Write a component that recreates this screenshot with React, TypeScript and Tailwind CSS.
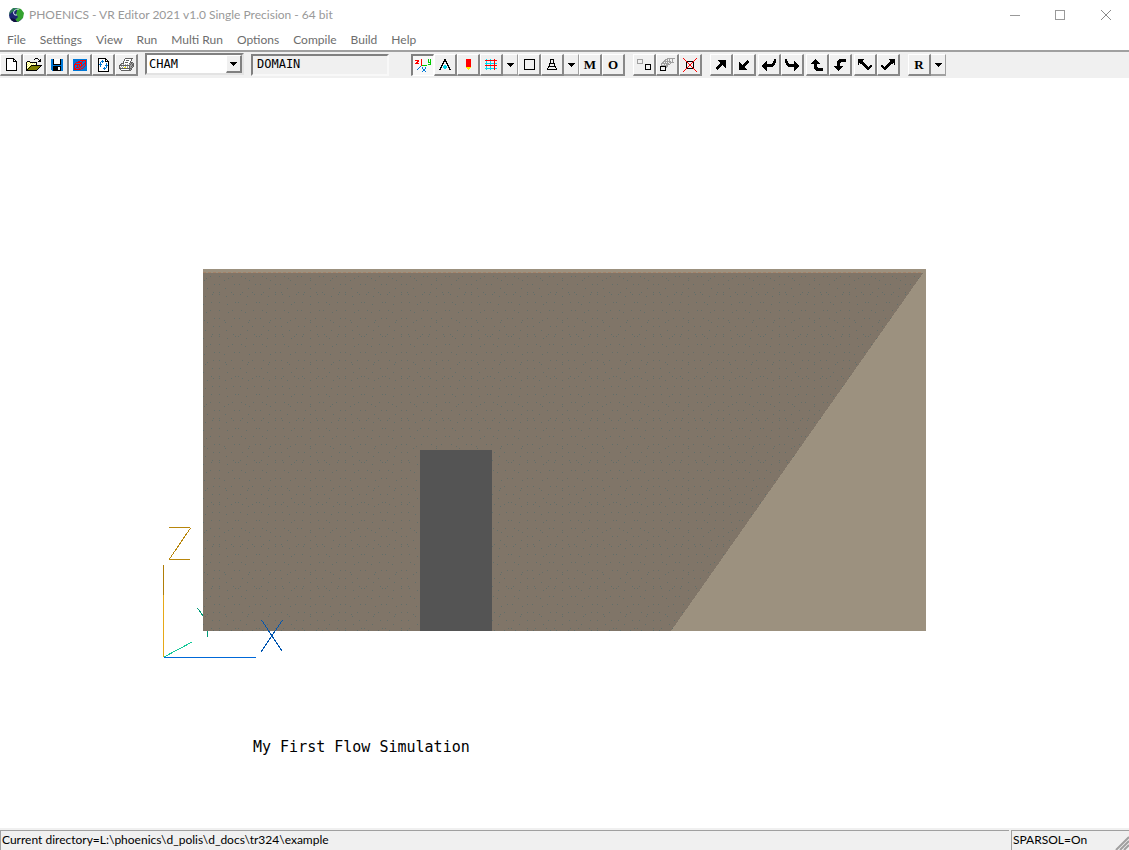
import React from "react";

const palette: Record<string, string> = {
  "#": "#000000",
  g: "#a0a0a0",
  d: "#606060",
  w: "#ffffff",
  y: "#ffff66",
  o: "#808000",
  b: "#0078d7",
  r: "#ff0000",
  l: "#00c800",
  c: "#00d8f0",
  n: "#fff000",
};

const newIcon = [
  "########...",
  "#wwwwww##..",
  "#wwwwww#w#.",
  "#wwwwww####",
  "#wwwwwwwww#",
  "#wwwwwwwww#",
  "#wwwwwwwww#",
  "#wwwwwwwww#",
  "#wwwwwwwww#",
  "#wwwwwwwww#",
  "#wwwwwwwww#",
  "#wwwwwwwww#",
  "###########",
];

const openIcon = [
  ".........###....",
  "........#...#.#.",
  ".............##.",
  ".###........###.",
  "#ywy#######.....",
  "#wywywywyw#.....",
  "#ywywywywy#.....",
  "#wywy###########",
  "#ywy#ooooooooo#.",
  "#wy#ooooooooo#..",
  "#y#ooooooooo#...",
  "##ooooooooo#....",
  "###########.....",
];

const saveIcon = [
  "bb#wwwwww#bb",
  "bb#wwwwww#bb",
  "bb#wwwwww#bb",
  "bb#wwwwww#bb",
  "bb#wwwwww#bb",
  "bb########bb",
  "bbbbbbbbbbbb",
  "bb########bb",
  "bb#####ww#bb",
  "bb#####ww#bb",
  "bb#####ww#bb",
  ".b########bb",
];

const domainIcon = [
  "bbbbbbbbbbbbbb",
  "bbbbbbbrrrrrrb",
  "bbbbbrrbbrbbrb",
  "bbbrrrrrrbbbrb",
  "bbrbbbbrrbbrrb",
  "brrrrrrbrbrbrb",
  "brbbrbrbrrbbrb",
  "brbbrbrrrbbrbb",
  "brbrrrbrbbrbbb",
  "brrbbbrbrrbbbb",
  "brrrrrrrbbbbbb",
  "bbbbbbbbbbbbbb",
];

const refreshIcon = [
  "########...",
  "#wwwwww##..",
  "#wwwbww#w#.",
  "#wwbbbw####",
  "#wbwbwwwww#",
  "#wbwwwwwbw#",
  "#bbbwwwwbw#",
  "#wbwwwwbbb#",
  "#wbwwwwwbw#",
  "#wwwwwbwbw#",
  "#wwwwbbbww#",
  "#wwwwwbwww#",
  "#wwwwwwwww#",
  "###########",
];

const printIcon = [
  "......dddddddd.",
  ".....dwwwwwwd..",
  ".....dwdddwwd..",
  "....dwwwwwwd...",
  "....dwdddwwddd.",
  "..dddwwwwwdgdgd",
  ".dgwgwgwgwgdgdd",
  "dddddddddddggdd",
  "dwgwgwgwgwdgdgd",
  "dgwgwnnwgwdggd.",
  "ddddddddddddd..",
  ".dwwwwwwwwdgd..",
  "..dddddddddd...",
];

const axesIcon = [
  "......r......l.l",
  "rrrr..r......l.l",
  "..rr..r......l.l",
  ".rr...r......lll",
  "rrrr..r........l",
  "......r......lll",
  "......rlllll....",
  ".....b..........",
  "....b..b..b.....",
  "...b...b..b.....",
  "..b.....bb......",
  "........bb......",
  ".......b..b.....",
];

const eyeIcon = [
  ".....##.....",
  ".....##.....",
  "....####....",
  "....#..#....",
  "...##..##...",
  "...#....#...",
  "..##.cc.##..",
  "..#.cccc.#..",
  ".##.cccc.##.",
  ".#...cc...#.",
  "##........##",
];

const probeIcon = [
  "rrrrr",
  "rrrrr",
  "rrrrr",
  "rrrrr",
  "rrrrr",
  "rrrrr",
  "rrrrr",
  "rrrrr",
  "nnnnn",
  ".nnn.",
  "..n..",
];

const gridIcon = [
  ".c...c...r..",
  "rrrrrrrrrrrr",
  ".c...c...r..",
  ".c...c...r..",
  "cccccccccrcc",
  ".c...c...r..",
  "rrrrrrrrrrrr",
  ".c...c...r..",
  ".c...c...r..",
  "cccccccccrcc",
  ".c...c...r..",
];

const squareIcon = [
  "###########",
  "#.........#",
  "#.........#",
  "#.........#",
  "#.........#",
  "#.........#",
  "#.........#",
  "#.........#",
  "#.........#",
  "#.........#",
  "###########",
];

const sceneIcon = [
  "...####...",
  "...#..#...",
  "...#..#...",
  "...#..#...",
  "..######..",
  "..#....#..",
  "..#....#..",
  ".########.",
  ".#......#.",
  "#........#",
  "##########",
];

const duplicateIcon = [
  "gggggg........",
  "g....g........",
  "g....g........",
  "g....g........",
  "gggggg........",
  "........######",
  "........#....#",
  "........#....#",
  "........#....#",
  "........#....#",
  "........######",
];

const arrayIcon = [
  ".......gggggggg",
  ".....ggg.g..g..",
  "....gg.g.g..g..",
  "...gggggggg.g..",
  "..gg.g.g.ggggg.",
  ".gggggggg.g....",
  ".g..g.gggg.....",
  ".ggggggg.......",
  "######gg.......",
  "#....#g........",
  "#....#.........",
  "#....#.........",
  "######.........",
];

const deleteIcon = [
  "r............r",
  ".r..........r.",
  "..r........r..",
  "...r######r...",
  "...#r....r#...",
  "...#.r..r.#...",
  "...#..rr..#...",
  "...#..rr..#...",
  "...#.r..r.#...",
  "...#r....r#...",
  "...r######r...",
  "..r........r..",
  ".r..........r.",
  "r............r",
];

const diagonalIcon = [
  "..########",
  "...#######",
  "....######",
  "....######",
  "...#######",
  "..####.###",
  ".####...##",
  "####.....#",
  "###.......",
  ".#........",
];

const returnIcon = [
  "............##",
  "............##",
  "....#......###",
  "...##......###",
  "..###.....###.",
  ".############.",
  "############..",
  "###########...",
  ".####.........",
  "..###.........",
  "...##.........",
  "....#.........",
];

const turnIcon = [
  "....#.......",
  "...###......",
  "..#####.....",
  ".#######....",
  "#########...",
  "...###......",
  "...###......",
  "...###......",
  "...####.....",
  "...#########",
  "....########",
  ".....#######",
];

const tiltIcon = [
  "######........",
  "#####.........",
  "#####.........",
  "######........",
  "#.#####.......",
  "#...####......",
  ".....####...##",
  "......####.###",
  ".......######.",
  "........####..",
  ".........##...",
];

const dropIcon = ["#######", ".#####.", "..###..", "...#..."];

function PixelIcon({ rows, className }: { rows: string[]; className?: string }) {
  const width = rows[0].length;
  return (
    <svg
      width={width}
      height={rows.length}
      viewBox={`0 0 ${width} ${rows.length}`}
      shapeRendering="crispEdges"
      className={className}
      aria-hidden="true"
    >
      {rows.map((row, y) =>
        row.split("").map((cell, x) =>
          palette[cell] ? (
            <rect key={`${x}-${y}`} x={x} y={y} width="1" height="1" fill={palette[cell]} />
          ) : null
        )
      )}
    </svg>
  );
}

type ToolProps = {
  label: string;
  rows?: string[];
  text?: string;
  flip?: string;
  pressed?: boolean;
};

function Tool({ label, rows, text, flip, pressed }: ToolProps) {
  return (
    <button
      type="button"
      aria-label={label}
      className={
        pressed
          ? "flex h-[22px] w-[23px] items-center justify-center border-t-2 border-l-2 border-r border-b border-t-[#808080] border-l-[#808080] border-r-white border-b-white bg-[#f8f8f8]"
          : "flex h-[22px] w-[23px] items-center justify-center border-t border-l border-r-2 border-b-2 border-t-white border-l-white border-r-[#888888] border-b-[#888888] bg-[#f0f0f0]"
      }
    >
      {rows && <PixelIcon rows={rows} className={flip} />}
      {text && (
        <span className="font-['Liberation_Serif'] text-[13px] leading-none font-bold">{text}</span>
      )}
    </button>
  );
}

function DropTool({ label }: { label: string }) {
  return (
    <button
      type="button"
      aria-label={label}
      className="flex h-[22px] w-[15px] items-center justify-center border-t border-r border-b-2 border-t-white border-r-[#a0a0a0] border-b-[#a0a0a0] bg-[#f0f0f0]"
    >
      <PixelIcon rows={dropIcon} />
    </button>
  );
}

function TitleBar() {
  return (
    <header className="flex h-[30px] items-center pl-2">
      <svg width="16" height="16" viewBox="0 0 16 16" aria-hidden="true">
        <circle cx="8" cy="8" r="7" fill="#1c2470" />
        <path d="M9 1l4 1 3 4-1 5-5 4-3-2 3-3-2-3 1-3z" fill="#35a22f" />
        <path d="M2 4l3-3 4 0-3 3-3 2-2 2z" fill="#2b7d55" />
        <path d="M11 2Q6 2 5.500 6Q6 9 9 8" fill="none" stroke="#d8e6f0" />
        <path d="M3 11l4 1 2 3-3 0-3-2z" fill="#101040" />
      </svg>
      <h1 className="ml-[5px] flex-1 text-xs text-[#999999]">
        PHOENICS - VR Editor 2021 v1.0 Single Precision - 64 bit
      </h1>
      <div className="flex">
        <button type="button" aria-label="Minimize" className="flex h-[28px] w-[46px] items-center justify-center">
          <svg width="11" height="11" shapeRendering="crispEdges">
            <path d="M0 5.500h10" stroke="#999999" />
          </svg>
        </button>
        <button type="button" aria-label="Maximize" className="flex h-[28px] w-[45px] items-center justify-center">
          <svg width="11" height="11" shapeRendering="crispEdges">
            <rect x=".5" y=".5" width="9" height="9" fill="none" stroke="#999999" />
          </svg>
        </button>
        <button type="button" aria-label="Close" className="flex h-[28px] w-[46px] items-center justify-center">
          <svg width="11" height="11">
            <path d="M0 0l10 10M10 0l-10 10" stroke="#8a8a8a" />
          </svg>
        </button>
      </div>
    </header>
  );
}

function MenuBar() {
  const menus = [
    "File",
    "Settings",
    "View",
    "Run",
    "Multi Run",
    "Options",
    "Compile",
    "Build",
    "Help",
  ];

  return (
    <nav className="flex h-5 items-center">
      {menus.map((menu) => (
        <button key={menu} type="button" className="px-[7px] text-xs text-[#6d6d6d]">
          {menu}
        </button>
      ))}
    </nav>
  );
}

function Toolbar() {
  return (
    <div className="flex h-7 items-center border-t-2 border-[#a0a0a0] bg-[#f0f0f0]">
      <div className="flex">
        <Tool label="New" rows={newIcon} />
        <Tool label="Open" rows={openIcon} />
        <Tool label="Save" rows={saveIcon} />
        <Tool label="Domain" rows={domainIcon} />
        <Tool label="Reload" rows={refreshIcon} />
        <Tool label="Print" rows={printIcon} />
      </div>
      <div className="relative ml-[7px] self-start pt-px">
        <select
          aria-label="Object group"
          className="block h-[22px] w-[99px] appearance-none border-2 border-t-[#808080] border-r-[#e3e3e3] border-b-[#e3e3e3] border-l-[#808080] bg-white pl-[2px] font-['DejaVu_Sans_Mono'] text-xs leading-none"
        >
          <option>CHAM</option>
        </select>
        <span className="pointer-events-none absolute top-[3px] right-[2px] flex h-[18px] w-4 items-center justify-center border-t border-l border-r-2 border-b-2 border-t-white border-l-white border-r-[#808080] border-b-[#808080] bg-[#f0f0f0]">
          <PixelIcon rows={dropIcon} />
        </span>
      </div>
      <input
        aria-label="Current object"
        readOnly
        value="DOMAIN"
        className="ml-[7px] h-[22px] w-[138px] border-2 border-t-[#808080] border-r-[#f8f8f8] border-b-[#f8f8f8] border-l-[#808080] bg-[#f0f0f0] pb-[2px] pl-1 font-['DejaVu_Sans_Mono'] text-xs leading-none"
      />
      <div className="ml-[22px] flex">
        <Tool label="Axes" rows={axesIcon} pressed />
        <Tool label="View point" rows={eyeIcon} />
        <Tool label="Probe" rows={probeIcon} />
        <Tool label="Mesh" rows={gridIcon} />
        <DropTool label="Mesh options" />
        <Tool label="Wireframe" rows={squareIcon} />
        <Tool label="Object" rows={sceneIcon} />
        <DropTool label="Object options" />
        <Tool label="Movement" text="M" />
        <Tool label="Object management" text="O" />
      </div>
      <div className="ml-2 flex">
        <Tool label="Duplicate" rows={duplicateIcon} />
        <Tool label="Array" rows={arrayIcon} />
        <Tool label="Delete" rows={deleteIcon} />
      </div>
      <div className="ml-2 flex gap-[2px]">
        <div className="flex">
          <Tool label="Zoom in" rows={diagonalIcon} />
          <Tool label="Zoom out" rows={diagonalIcon} flip="rotate-180" />
        </div>
        <div className="flex">
          <Tool label="Rotate left" rows={returnIcon} />
          <Tool label="Rotate right" rows={returnIcon} flip="-scale-x-100" />
        </div>
        <div className="flex">
          <Tool label="Rotate up" rows={turnIcon} />
          <Tool label="Rotate down" rows={turnIcon} flip="-scale-y-100" />
        </div>
        <div className="flex">
          <Tool label="Tilt left" rows={tiltIcon} />
          <Tool label="Tilt right" rows={tiltIcon} flip="-scale-x-100" />
        </div>
      </div>
      <div className="ml-2 flex">
        <Tool label="Reset" text="R" />
        <DropTool label="Reset options" />
      </div>
    </div>
  );
}

function Scene() {
  // speckles of the wall, one per 7px cell of a repeating tile
  const dots = [];
  for (let row = 0; row < 18; row++) {
    for (let col = 0; col < 18; col++) {
      dots.push({
        x: col * 7 + ((row * 17 + col * 29 + row * col * 11) % 5),
        y: row * 7 + ((row * 13 + col * 23 + col * col * 7) % 6),
      });
    }
  }

  return (
    <svg
      viewBox="0 78 1129 750"
      className="block min-h-0 w-full flex-1 bg-white"
      shapeRendering="crispEdges"
      role="img"
      aria-label="Flow domain"
    >
      <defs>
        <pattern id="speckle" width="126" height="126" patternUnits="userSpaceOnUse">
          {dots.map((dot, i) => (
            <rect key={i} x={dot.x} y={dot.y} width="1" height="1" fill="#626e69" />
          ))}
        </pattern>
      </defs>
      <path d="M197.500 608l6 8.500M207.500 630v7" fill="none" stroke="#009a78" />
      <rect x="203" y="269" width="723" height="362" fill="#9c917f" />
      <path d="M203 273H923L671 631H203z" fill="#807568" />
      <path d="M203 273H923L671 631H203z" fill="url(#speckle)" />
      <path d="M203 272.500H923" stroke="#a58268" strokeDasharray="3 2" />
      <rect x="420" y="450" width="72" height="181" fill="#545454" />
      <g fill="none">
        <path d="M169 527.500h21M190.500 528L169.500 559M169 559.500h21" stroke="#b8860b" />
        <path d="M163.500 565v30" stroke="#b07d08" />
        <path d="M163.500 595v62" stroke="#e6a817" />
        <path d="M164 657l28 -15" stroke="#14c898" />
        <path d="M164 657.500h92" stroke="#0068d8" />
        <path d="M261.500 620l20.500 31M282.500 620L261 652" stroke="#0055b0" />
      </g>
      <text x="253" y="752" fontSize="15" fontFamily="'DejaVu Sans Mono', monospace">
        My First Flow Simulation
      </text>
    </svg>
  );
}

function StatusBar() {
  return (
    <footer className="flex h-[22px] gap-[2px] bg-[#f0f0f0] pt-[2px] text-xs text-black">
      <p className="flex flex-1 items-center border-t border-l border-[#a0a0a0] pb-px pl-px">
        Current directory=L:\phoenics\d_polis\d_docs\tr324\example
      </p>
      <div className="flex w-[118px] items-center justify-between border-t border-l border-[#a0a0a0] pl-px">
        <span className="pb-px">SPARSOL=On</span>
        <svg width="14" height="14" viewBox="0 0 14 14" className="self-end">
          <path d="M1 14L14 1M5 14l9-9M9 14l5-5" stroke="#a0a0a0" strokeWidth="2" />
        </svg>
      </div>
    </footer>
  );
}

function App() {
  return (
    <div className="flex h-screen flex-col bg-white font-['Lato',sans-serif]">
      <TitleBar />
      <MenuBar />
      <Toolbar />
      <Scene />
      <StatusBar />
    </div>
  );
}

export default App;
